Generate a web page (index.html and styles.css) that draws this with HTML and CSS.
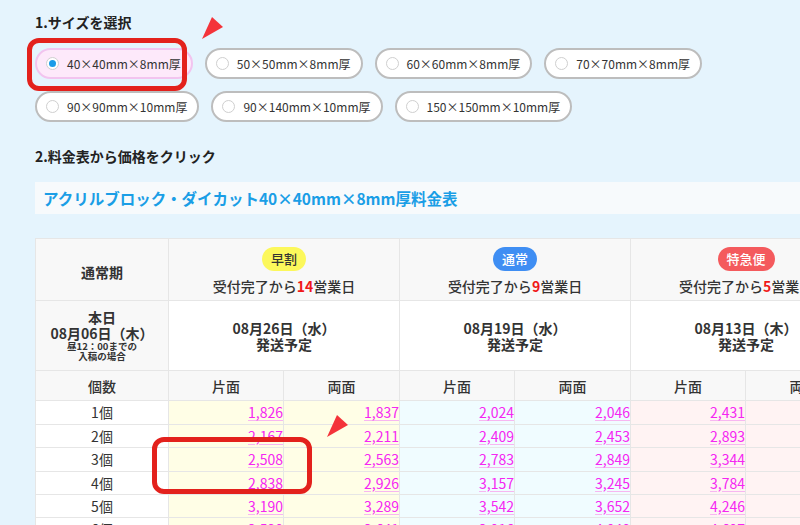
FILE: index.html
```html
<!DOCTYPE html>
<html lang="ja">
<head>
<meta charset="utf-8">
<title>料金表</title>
<link rel="stylesheet" href="styles.css">
</head>
<body>
<div class="page">
  <h2 class="step">1.サイズを選択</h2>
  <div class="sizes">
    <label class="pill selected"><span class="radio"></span>40×40mm×8mm厚</label>
    <label class="pill"><span class="radio"></span>50×50mm×8mm厚</label>
    <label class="pill"><span class="radio"></span>60×60mm×8mm厚</label>
    <label class="pill"><span class="radio"></span>70×70mm×8mm厚</label>
    <label class="pill"><span class="radio"></span>90×90mm×10mm厚</label>
    <label class="pill"><span class="radio"></span>90×140mm×10mm厚</label>
    <label class="pill"><span class="radio"></span>150×150mm×10mm厚</label>
  </div>

  <h2 class="step step2">2.料金表から価格をクリック</h2>
  <div class="title-bar">アクリルブロック・ダイカット40×40mm×8mm厚料金表</div>

  <div class="table-wrap">
    <table class="price">
      <colgroup>
        <col class="c-qty">
        <col class="c-a"><col class="c-b">
        <col class="c-a"><col class="c-b">
        <col class="c-a"><col class="c-b">
      </colgroup>
      <thead>
        <tr class="r-plan">
          <th class="lead">通常期</th>
          <th colspan="2"><span class="badge b-early">早割</span><span class="days">受付完了から<em>14</em>営業日</span></th>
          <th colspan="2"><span class="badge b-normal">通常</span><span class="days">受付完了から<em>9</em>営業日</span></th>
          <th colspan="2"><span class="badge b-rush">特急便</span><span class="days">受付完了から<em>5</em>営業日</span></th>
        </tr>
        <tr class="r-ship">
          <th class="lead today"><span class="big">本日</span><span class="big">08月06日（木）</span><span class="small">昼12：00までの</span><span class="small">入稿の場合</span></th>
          <td colspan="2" class="ship">08月26日（水）<br>発送予定</td>
          <td colspan="2" class="ship">08月19日（水）<br>発送予定</td>
          <td colspan="2" class="ship">08月13日（木）<br>発送予定</td>
        </tr>
        <tr class="r-side">
          <th>個数</th><th>片面</th><th>両面</th><th>片面</th><th>両面</th><th>片面</th><th>両面</th>
        </tr>
      </thead>
      <tbody>
        <tr><th>1個</th><td class="y"><a>1,826</a></td><td class="y"><a>1,837</a></td><td class="b"><a>2,024</a></td><td class="b"><a>2,046</a></td><td class="p"><a>2,431</a></td><td class="p"><a>2,453</a></td></tr>
        <tr><th>2個</th><td class="y"><a>2,167</a></td><td class="y"><a>2,211</a></td><td class="b"><a>2,409</a></td><td class="b"><a>2,453</a></td><td class="p"><a>2,893</a></td><td class="p"><a>2,943</a></td></tr>
        <tr><th>3個</th><td class="y"><a>2,508</a></td><td class="y"><a>2,563</a></td><td class="b"><a>2,783</a></td><td class="b"><a>2,849</a></td><td class="p"><a>3,344</a></td><td class="p"><a>3,421</a></td></tr>
        <tr><th>4個</th><td class="y"><a>2,838</a></td><td class="y"><a>2,926</a></td><td class="b"><a>3,157</a></td><td class="b"><a>3,245</a></td><td class="p"><a>3,784</a></td><td class="p"><a>3,894</a></td></tr>
        <tr><th>5個</th><td class="y"><a>3,190</a></td><td class="y"><a>3,289</a></td><td class="b"><a>3,542</a></td><td class="b"><a>3,652</a></td><td class="p"><a>4,246</a></td><td class="p"><a>4,378</a></td></tr>
        <tr><th>6個</th><td class="y"><a>3,520</a></td><td class="y"><a>3,641</a></td><td class="b"><a>3,916</a></td><td class="b"><a>4,048</a></td><td class="p"><a>4,697</a></td><td class="p"><a>4,851</a></td></tr>
      </tbody>
    </table>
  </div>

  <div class="mark mark-size"></div>
  <div class="mark mark-price"></div>
  <svg class="arrow arrow-size" width="25" height="26" viewBox="0 0 25 26"><polygon points="12,2 23,12 2,24" fill="#f4333a"/></svg>
  <svg class="arrow arrow-price" width="25" height="26" viewBox="0 0 25 26"><polygon points="12,2 23,12 2,24" fill="#f4333a"/></svg>
</div>
</body>
</html>
```

FILE: styles.css
```css
html, body {
  margin: 0;
  padding: 0;
}
body {
  background: #e5f4fd;
  font-family: "Noto Sans CJK JP", "Noto Sans", sans-serif;
  color: #333;
}
.page {
  position: relative;
  width: 800px;
  height: 525px;
  overflow: hidden;
  box-sizing: border-box;
  padding: 12px 0 0 35px;
}
.step {
  margin: 0;
  font-size: 14px;
  line-height: 20px;
  font-weight: 700;
  color: #222;
}
.step2 {
  margin-top: 24px;
}
.sizes {
  display: flex;
  flex-wrap: wrap;
  gap: 12px 12px;
  margin-top: 16px;
  width: 700px;
}
.pill {
  display: flex;
  align-items: center;
  box-sizing: border-box;
  height: 31px;
  padding: 0 10px 0 9px;
  border: 2px solid #bdbdbd;
  border-radius: 16px;
  background: #fff;
  font-size: 12px;
  color: #333;
  white-space: nowrap;
}
.pill.selected {
  background: #fde9fa;
  border-color: #f2c4ef;
}
.radio {
  width: 13px;
  height: 13px;
  box-sizing: border-box;
  border: 1px solid #cfcfcf;
  border-radius: 50%;
  background: #fff;
  margin-right: 8px;
  display: flex;
  align-items: center;
  justify-content: center;
}
.selected .radio::after {
  content: "";
  width: 7px;
  height: 7px;
  border-radius: 50%;
  background: #1a9be8;
}
.title-bar {
  margin-top: 16px;
  height: 32px;
  line-height: 32px;
  padding: 0 8px;
  background: #f7fafc;
  color: #1a9ee6;
  font-size: 15.5px;
  font-weight: 700;
  white-space: nowrap;
}
.table-wrap {
  margin-top: 24px;
  width: 830px;
}
.price {
  border-collapse: collapse;
  table-layout: fixed;
  width: 825px;
  border: 1px solid #dcdcdc;
  font-size: 14px;
}
.c-qty { width: 133px; }
.c-a { width: 115px; }
.c-b { width: 116px; }
.price th, .price td {
  border: 1px solid #e6e6e6;
  padding: 0;
}
.r-plan th {
  background: #f8f8f8;
  padding: 8px 0 3px;
  text-align: center;
  font-weight: 500;
  vertical-align: top;
}
.r-plan th.lead {
  vertical-align: middle;
  font-weight: 700;
  font-size: 14px;
}
.badge {
  display: block;
  width: max-content;
  margin: 0 auto 4px;
  height: 24px;
  line-height: 24px;
  padding: 0 9px;
  border-radius: 12px;
  font-size: 13px;
  font-weight: 500;
}
.b-early { background: #fcf85b; color: #333; }
.b-normal { background: #3f8ef3; color: #fff; }
.b-rush { background: #f45a5d; color: #fff; }
.days {
  display: block;
  line-height: 22px;
  white-space: nowrap;
  font-size: 14px;
}
.days em {
  font-style: normal;
  font-weight: 700;
  color: #f01818;
}
.r-ship th.lead {
  background: #f8f8f8;
  padding: 8px 0 9px;
  text-align: center;
}
.today span {
  display: block;
  white-space: nowrap;
  font-weight: 700;
}
.today .big {
  font-size: 14px;
  line-height: 16px;
}
.today .small {
  font-size: 9.5px;
  line-height: 10px;
}
.ship {
  background: #fff;
  text-align: center;
  vertical-align: middle;
  font-weight: 700;
  line-height: 16px;
  white-space: nowrap;
}
.r-side th {
  background: #f8f8f8;
  padding: 4px 0 3px;
  line-height: 22.4px;
  font-weight: 500;
  text-align: center;
}
tbody th {
  background: #fff;
  font-weight: 400;
  text-align: center;
  line-height: 22.4px;
}
tbody td {
  text-align: right;
  padding: 0 6px;
  line-height: 22.4px;
}
tbody td.y { background: #fffee6; }
tbody td.b { background: #f0fcff; }
tbody td.p { background: #fff3f3; }
tbody td a {
  color: #f526f2;
  text-decoration: underline;
  text-decoration-color: #f7b6f1;
  text-underline-offset: 2px;
}
.mark {
  position: absolute;
  box-sizing: border-box;
  border: 5px solid #e3211c;
  border-radius: 12px;
}
.mark-size {
  left: 27px;
  top: 38px;
  width: 160px;
  height: 53px;
}
.mark-price {
  left: 152px;
  top: 437px;
  width: 160px;
  height: 57px;
}
.arrow {
  position: absolute;
}
.arrow-size {
  left: 200px;
  top: 15px;
}
.arrow-price {
  left: 325px;
  top: 413px;
}
```
